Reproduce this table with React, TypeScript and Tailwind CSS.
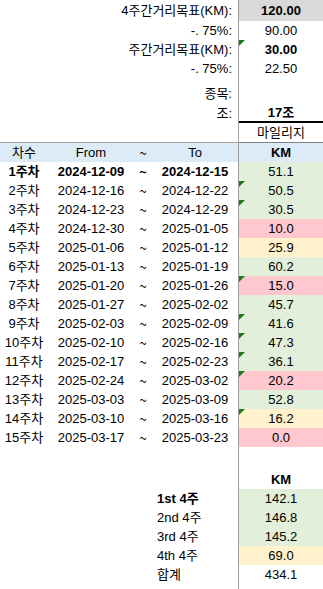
import React from 'react';

type Week = [string, string, string, string, 'g' | 'r' | 'y', boolean];

const weeks: Week[] = [
  ['1주차', '2024-12-09', '2024-12-15', '51.1', 'g', false],
  ['2주차', '2024-12-16', '2024-12-22', '50.5', 'g', true],
  ['3주차', '2024-12-23', '2024-12-29', '30.5', 'g', true],
  ['4주차', '2024-12-30', '2025-01-05', '10.0', 'r', false],
  ['5주차', '2025-01-06', '2025-01-12', '25.9', 'y', false],
  ['6주차', '2025-01-13', '2025-01-19', '60.2', 'g', false],
  ['7주차', '2025-01-20', '2025-01-26', '15.0', 'r', true],
  ['8주차', '2025-01-27', '2025-02-02', '45.7', 'g', false],
  ['9주차', '2025-02-03', '2025-02-09', '41.6', 'g', true],
  ['10주차', '2025-02-10', '2025-02-16', '47.3', 'g', true],
  ['11주차', '2025-02-17', '2025-02-23', '36.1', 'g', true],
  ['12주차', '2025-02-24', '2025-03-02', '20.2', 'r', true],
  ['13주차', '2025-03-03', '2025-03-09', '52.8', 'g', false],
  ['14주차', '2025-03-10', '2025-03-16', '16.2', 'y', true],
  ['15주차', '2025-03-17', '2025-03-23', '0.0', 'r', false],
];

const totals: [string, string, 'g' | 'y' | 'n', boolean][] = [
  ['1st 4주', '142.1', 'g', true],
  ['2nd 4주', '146.8', 'g', false],
  ['3rd 4주', '145.2', 'g', false],
  ['4th 4주', '69.0', 'y', false],
  ['합계', '434.1', 'n', false],
];

const bg = {
  g: 'bg-[#e2efda]',
  r: 'bg-[#ffc7ce]',
  y: 'bg-[#fff2cc]',
  n: '',
};

// excel's little green error marker
const Flag = () => (
  <svg className="absolute left-0 top-0" width="6" height="6" viewBox="0 0 6 6">
    <polygon points="0,0 6,0 0,6" fill="#1f7a1f" />
  </svg>
);

const Row = ({
  h,
  left,
  right,
  leftCls = '',
  rightCls = '',
  flag = false,
}: {
  h: string;
  left?: React.ReactNode;
  right?: React.ReactNode;
  leftCls?: string;
  rightCls?: string;
  flag?: boolean;
}) => (
  <div className={`flex ${h}`}>
    <div className={`w-[239px] shrink-0 border-r border-[#9e9e9e] flex items-center ${leftCls}`}>{left}</div>
    <div className={`relative flex-1 flex items-center justify-center ${rightCls}`}>
      {flag && <Flag />}
      {right}
    </div>
  </div>
);

const Cols = ({ a, b, d }: { a: string; b: string; d: string }) => (
  <>
    <span className="w-[48px] text-center">{a}</span>
    <span className="w-[86px] text-center">{b}</span>
    <span className="w-[18px] text-center font-['Noto_Sans_CJK_KR',sans-serif]">~</span>
    <span className="w-[86px] text-center">{d}</span>
  </>
);

export default function App() {
  return (
    <div className="w-[323px] min-h-screen flex flex-col bg-white text-black text-[13px] leading-none font-['Liberation_Sans','Noto_Sans_CJK_KR',sans-serif]">
      {/* targets */}
      <Row h="h-[21px]" leftCls="justify-end pr-[6px]" rightCls="bg-[#d9d9d9] font-bold" left="4주간거리목표(KM):" right="120.00" />
      <Row h="h-[19px]" leftCls="justify-end pr-[6px]" left="-. 75%:" right="90.00" />
      <Row h="h-[19px]" leftCls="justify-end pr-[6px]" rightCls="font-bold" flag left="주간거리목표(KM):" right="30.00" />
      <Row h="h-[19px]" leftCls="justify-end pr-[6px]" left="-. 75%:" right="22.50" />
      <Row h="h-[6px]" />
      <Row h="h-[19px]" leftCls="justify-end pr-[6px]" left="종목:" />
      <Row h="h-[20px]" leftCls="justify-end pr-[6px]" rightCls="font-bold border-b-2 border-black" left="조:" right="17조" />
      <Row h="h-[20px]" leftCls="border-b border-[#a6a6a6]" rightCls="border-b border-[#7f7f7f]" right="마일리지" />

      {/* header */}
      <Row
        h="h-[19px]"
        leftCls="bg-[#ddebf7]"
        rightCls="bg-[#ddebf7] font-bold"
        left={<Cols a="차수" b="From" d="To" />}
        right="KM"
      />

      {weeks.map(([name, from, to, km, c, flag], i) => (
        <Row
          key={name}
          h="h-[19px]"
          leftCls={i === 0 ? 'font-bold' : ''}
          rightCls={bg[c]}
          flag={flag}
          left={<Cols a={name} b={from} d={to} />}
          right={km}
        />
      ))}

      <Row h="h-[23px]" />
      <Row h="h-[19px]" rightCls="font-bold" right="KM" />
      {totals.map(([label, km, c, bold]) => (
        <Row
          key={label}
          h="h-[19px]"
          leftCls={`pl-[157px] ${bold ? 'font-bold' : ''}`}
          rightCls={bg[c]}
          left={label}
          right={km}
        />
      ))}
      <Row h="flex-1" />
    </div>
  );
}
